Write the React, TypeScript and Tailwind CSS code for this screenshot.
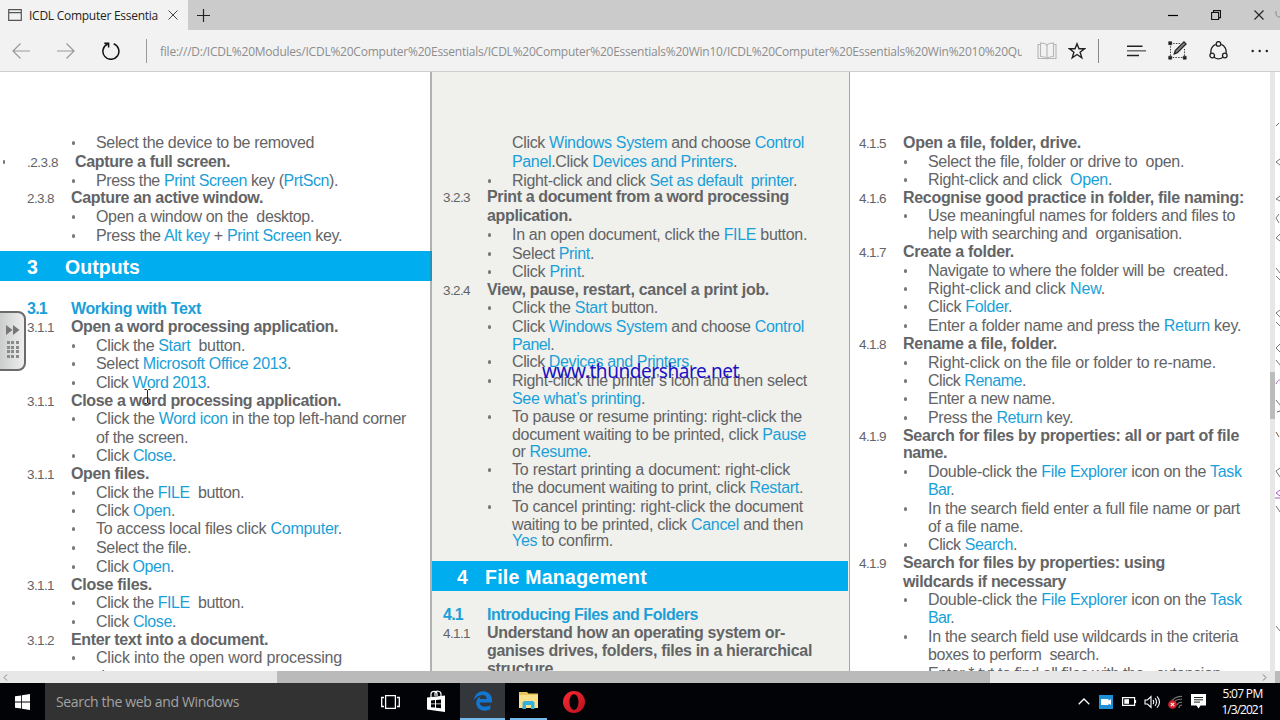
import clsx from "clsx"
import { FaEdgeLegacy } from "react-icons/fa6"

type Row = {
    y: number
    t: string
    w: number
    num?: string
    numW?: number
    kind?: 'head' | 'title' | 'band' | 'cont'
    indent?: number
    outer?: boolean
}

const SANS = '"Liberation Sans", Arial, sans-serif'
const UI = '"Open Sans", "Noto Sans", sans-serif'
const WIDE = '"Noto Sans", "DejaVu Sans", sans-serif'

const ctx = document.createElement('canvas').getContext('2d')!

// letter spacing that stretches a line to the wanted width
const spacing = (text: string, font: string, w: number) => {
    ctx.font = font
    return (w - ctx.measureText(text).width) / text.length
}

// parts between pipes are highlighted
function Fit({ text, w, size, weight = 400, family = SANS, className }: {
    text: string, w: number, size: number, weight?: number, family?: string, className?: string
}) {
    const plain = text.replaceAll('|', '')
    const letterSpacing = spacing(plain, `${weight} ${size}px ${family}`, w)
    return (
        <span className={clsx("whitespace-pre", className)} style={{ letterSpacing, fontSize: size, fontWeight: weight, fontFamily: family }}>
            {text.split('|').map((part, i) => i % 2 ? <span key={i} className="text-[#1a9fd8]">{part}</span> : part)}
        </span>
    )
}

const left: Row[] = [
    { y: 143, t: 'Select the device to be removed', w: 218 },
    { y: 162, t: 'Capture a full screen.', w: 155, num: '.2.3.8', numW: 31, kind: 'head', indent: 4, outer: true },
    { y: 181, t: 'Press the |Print Screen| key (|PrtScn|).', w: 242 },
    { y: 198, t: 'Capture an active window.', w: 192, num: '2.3.8', kind: 'head' },
    { y: 217, t: 'Open a window on the  desktop.', w: 218 },
    { y: 236, t: 'Press the |Alt key| + |Print Screen| key.', w: 247 },
    { y: 267, t: 'Outputs', w: 75, num: '3', numW: 10, kind: 'band' },
    { y: 309, t: 'Working with Text', w: 130, num: '3.1', numW: 20, kind: 'title' },
    { y: 327, t: 'Open a word processing application.', w: 267, num: '3.1.1', kind: 'head' },
    { y: 346, t: 'Click the |Start|  button.', w: 149 },
    { y: 364, t: 'Select |Microsoft Office 2013|.', w: 195 },
    { y: 383, t: 'Click |Word 2013|.', w: 114 },
    { y: 401, t: 'Close a word processing application.', w: 270, num: '3.1.1', kind: 'head' },
    { y: 419, t: 'Click the |Word icon| in the top left-hand corner', w: 310 },
    { y: 438, t: 'of the screen.', w: 92, kind: 'cont' },
    { y: 456, t: 'Click |Close|.', w: 80 },
    { y: 474, t: 'Open files.', w: 78, num: '3.1.1', kind: 'head' },
    { y: 493, t: 'Click the |FILE|  button.', w: 148 },
    { y: 511, t: 'Click |Open|.', w: 79 },
    { y: 529, t: 'To access local files click |Computer|.', w: 246 },
    { y: 548, t: 'Select the file.', w: 95 },
    { y: 567, t: 'Click |Open|.', w: 78 },
    { y: 585, t: 'Close files.', w: 81, num: '3.1.1', kind: 'head' },
    { y: 603, t: 'Click the |FILE|  button.', w: 148 },
    { y: 622, t: 'Click |Close|.', w: 80 },
    { y: 640, t: 'Enter text into a document.', w: 197, num: '3.1.2', kind: 'head' },
    { y: 658, t: 'Click into the open word processing', w: 246 },
    { y: 677, t: 'document.', w: 70, kind: 'cont' },
]

const middle: Row[] = [
    { y: 143, t: 'Click |Windows System| and choose |Control|', w: 292, kind: 'cont' },
    { y: 162, t: '|Panel|.Click |Devices and Printers|.', w: 225, kind: 'cont' },
    { y: 181, t: 'Right-click and click |Set as default  printer|.', w: 285 },
    { y: 197, t: 'Print a document from a word processing', w: 302, num: '3.2.3', kind: 'head' },
    { y: 216, t: 'application.', w: 85, kind: 'head' },
    { y: 235, t: 'In an open document, click the |FILE| button.', w: 295 },
    { y: 254, t: 'Select |Print|.', w: 82 },
    { y: 272, t: 'Click |Print|.', w: 73 },
    { y: 290, t: 'View, pause, restart, cancel a print job.', w: 282, num: '3.2.4', kind: 'head' },
    { y: 308, t: 'Click the |Start| button.', w: 146 },
    { y: 327, t: 'Click |Windows System| and choose |Control|', w: 292 },
    { y: 345, t: '|Panel|.', w: 42, kind: 'cont' },
    { y: 362, t: 'Click |Devices and Printers|.', w: 181 },
    { y: 381, t: 'Right-click the printer’s icon and then select', w: 295 },
    { y: 399, t: '|See what’s printing|.', w: 133, kind: 'cont' },
    { y: 417, t: 'To pause or resume printing: right-click the', w: 290 },
    { y: 435, t: 'document waiting to be printed, click |Pause|', w: 294, kind: 'cont' },
    { y: 452, t: 'or |Resume|.', w: 79, kind: 'cont' },
    { y: 470, t: 'To restart printing a document: right-click', w: 278 },
    { y: 488, t: 'the document waiting to print, click |Restart|.', w: 291, kind: 'cont' },
    { y: 507, t: 'To cancel printing: right-click the document', w: 291 },
    { y: 525, t: 'waiting to be printed, click |Cancel| and then', w: 291, kind: 'cont' },
    { y: 541, t: '|Yes| to confirm.', w: 101, kind: 'cont' },
    { y: 577, t: 'File Management', w: 162, num: '4', numW: 10, kind: 'band' },
    { y: 615, t: 'Introducing Files and Folders', w: 211, num: '4.1', numW: 20, kind: 'title' },
    { y: 633, t: 'Understand how an operating system or-', w: 298, num: '4.1.1', kind: 'head' },
    { y: 651, t: 'ganises drives, folders, files in a hierarchical', w: 325, kind: 'head' },
    { y: 669, t: 'structure.', w: 70, kind: 'head' },
]

const right: Row[] = [
    { y: 143, t: 'Open a file, folder, drive.', w: 178, num: '4.1.5', kind: 'head' },
    { y: 162, t: 'Select the file, folder or drive to  open.', w: 256 },
    { y: 180, t: 'Right-click and click  |Open|.', w: 184 },
    { y: 198, t: 'Recognise good practice in folder, file naming:', w: 341, num: '4.1.6', kind: 'head' },
    { y: 216, t: 'Use meaningful names for folders and files to', w: 307 },
    { y: 234, t: 'help with searching and  organisation.', w: 254, kind: 'cont' },
    { y: 252, t: 'Create a folder.', w: 111, num: '4.1.7', kind: 'head' },
    { y: 271, t: 'Navigate to where the folder will be  created.', w: 300 },
    { y: 289, t: 'Right-click and click |New|.', w: 177 },
    { y: 307, t: 'Click |Folder|.', w: 84 },
    { y: 326, t: 'Enter a folder name and press the |Return| key.', w: 313 },
    { y: 344, t: 'Rename a file, folder.', w: 154, num: '4.1.8', kind: 'head' },
    { y: 363, t: 'Right-click on the file or folder to re-name.', w: 288 },
    { y: 381, t: 'Click |Rename|.', w: 98 },
    { y: 399, t: 'Enter a new name.', w: 127 },
    { y: 418, t: 'Press the |Return| key.', w: 145 },
    { y: 436, t: 'Search for files by properties: all or part of file', w: 336, num: '4.1.9', kind: 'head' },
    { y: 453, t: 'name.', w: 44, kind: 'head' },
    { y: 472, t: 'Double-click the |File Explorer| icon on the |Task|', w: 314 },
    { y: 490, t: '|Bar|.', w: 26, kind: 'cont' },
    { y: 509, t: 'In the search field enter a full file name or part', w: 312 },
    { y: 527, t: 'of a file name.', w: 95, kind: 'cont' },
    { y: 545, t: 'Click |Search|.', w: 89 },
    { y: 563, t: 'Search for files by properties: using', w: 262, num: '4.1.9', kind: 'head' },
    { y: 582, t: 'wildcards if necessary', w: 163, kind: 'head' },
    { y: 600, t: 'Double-click the |File Explorer| icon on the |Task|', w: 314 },
    { y: 618, t: '|Bar|.', w: 26, kind: 'cont' },
    { y: 637, t: 'In the search field use wildcards in the criteria', w: 310 },
    { y: 655, t: 'boxes to perform  search.', w: 171, kind: 'cont' },
    { y: 674, t: 'Enter *.txt to find all files with the   extension', w: 293, kind: 'cont' },
]

// top of the page area in the window
const PAGE_TOP = 73

function Line({ row, height }: { row: Row, height: number }) {
    const bold = row.kind === 'head' || row.kind === 'title'
    return (
        <div className="flex shrink-0 leading-[18px]" style={{ height }}>
            <div className={clsx("relative -ml-px mr-px w-[43px] shrink-0", row.kind === 'title' && "text-[#1a9fd8]")}>
                {row.outer && <i className="absolute -left-[24px] top-2 h-[4px] w-[2px] rounded-full bg-[#77787a]" />}
                {row.num && (row.kind === 'title'
                    ? <Fit text={row.num} w={row.numW ?? 27} size={16} weight={700} />
                    : <Fit text={row.num} w={row.numW ?? 27} size={13.5} />)}
            </div>
            {!bold && (
                <div className="w-[25px] shrink-0">
                    {!row.kind && <i className="ml-px mt-[8px] block h-[4px] w-[2.500px] rounded-full bg-[#77787a]" />}
                </div>
            )}
            <div className={clsx(row.kind === 'title' && "text-[#1a9fd8]")} style={{ marginLeft: row.indent }}>
                <Fit text={row.t} w={row.w} size={16} weight={bold ? 700 : 400} />
            </div>
        </div>
    )
}

function Column({ rows, className, inset, bandClass }: { rows: Row[], className: string, inset: string, bandClass?: string }) {
    const half = (r: Row) => r.kind === 'band' ? 15 : 9
    const start = rows[0].y - 9 - PAGE_TOP
    return (
        <div className={clsx("flex h-full shrink-0 flex-col overflow-hidden", className)}>
            <div className="shrink-0" style={{ height: start }} />
            {rows.map((row, i) => {
                const next = rows[i + 1]
                const height = next ? (next.y - half(next)) - (row.y - half(row)) : 18
                if (row.kind === 'band') {
                    return (
                        <div key={i} className="shrink-0" style={{ height }}>
                            <div className={clsx("flex h-[30px] items-center bg-[#00adef] pt-[3px] leading-[27px] text-white", bandClass)}>
                                <div className="w-[38px] shrink-0">
                                    <Fit text={row.num!} w={row.numW!} size={19.5} weight={700} />
                                </div>
                                <Fit text={row.t} w={row.w} size={19.5} weight={700} />
                            </div>
                        </div>
                    )
                }
                return <div key={i} className={clsx("shrink-0", inset)}><Line row={row} height={height} /></div>
            })}
        </div>
    )
}

function TitleBar() {
    return (
        <div className="flex h-[30px] bg-[#cbcbcb]">
            <div className="flex w-[188px] items-center bg-[#f2f2f2] pl-2">
                <svg width="14" height="12" viewBox="0 0 14 12" fill="none" stroke="#555" strokeWidth="1.2"><path d="M.7.7h12.6v10.6H.7zM.7 3.6h12.6" /></svg>
                <div className="ml-[7px] w-[139px] leading-[30px] text-[#222]">
                    <Fit text="ICDL Computer Essentia" w={129} size={12} family={UI} />
                </div>
                <svg width="10" height="10" viewBox="0 0 10 10" stroke="#444" strokeWidth="1"><path d="M.5.5l9 9M9.500.5l-9 9" /></svg>
            </div>
            <svg className="ml-[9px] mt-[9px]" width="13" height="13" viewBox="0 0 13 13" stroke="#222" strokeWidth="1.2"><path d="M6.500 0v13M0 6.500h13" /></svg>
            <div className="ml-auto flex items-center">
                <svg className="mr-[33px]" width="10" height="10" viewBox="0 0 10 10" stroke="#000" strokeWidth="1.2"><path d="M0 5.500h10" /></svg>
                <svg className="mr-[33px]" width="10" height="10" viewBox="0 0 10 10" fill="none" stroke="#111" strokeWidth="1.1"><path d="M.6 2.500h7v7h-7zM2.500 2.500V.6h7v7H7.600" /></svg>
                <svg className="mr-[11px]" width="10" height="10" viewBox="0 0 10 10" stroke="#222" strokeWidth="1.1"><path d="M.5.5l9 9M9.500.5l-9 9" /></svg>
                <svg width="5" height="10" viewBox="0 0 5 10" fill="none" stroke="#8a8a8a"><path d="M1 1v3c0 2 2 3 4 3" /></svg>
            </div>
        </div>
    )
}

function AddressBar() {
    return (
        <div className="flex h-[42px] items-center border-b border-[#cfcfcf] bg-[#f2f2f2]">
            <svg className="ml-[12px]" width="18" height="16" viewBox="0 0 18 16" fill="none" stroke="#999" strokeWidth="1.2"><path d="M18 8H1M8.500.5L1 8l7.500 7.500" /></svg>
            <svg className="ml-[27px]" width="18" height="16" viewBox="0 0 18 16" fill="none" stroke="#999" strokeWidth="1.2"><path d="M0 8h17M9.500.5L17 8l-7.500 7.500" /></svg>
            <svg className="ml-[27px]" width="18" height="18" viewBox="0 0 18 18" fill="none" stroke="#111" strokeWidth="1.5"><path d="M11.700 1.800A8 8 0 1 1 5.600 2M2.300 1.200h4.300v4.300" /></svg>
            <div className="ml-[26px] h-6 w-px bg-[#999]" />
            <div className="ml-[13px] w-[862px] overflow-hidden leading-[24px] text-[#8d8d8d]">
                <Fit text="file:///D:/ICDL%20Modules/ICDL%20Computer%20Essentials/ICDL%20Computer%20Essentials%20Win10/ICDL%20Computer%20Essentials%20Win%2010%20Qu" w={864} size={12} family={UI} />
            </div>
            <svg className="ml-[15px]" width="20" height="18" viewBox="0 0 20 18" fill="none" stroke="#b5b5b5" strokeWidth="1.1"><path d="M10 3.500C9 1.500 6 1 3.500 1v13.500c3 0 5.500.5 6.500 2.300 1-1.800 3.500-2.300 6.500-2.300V1C14 1 11 1.500 10 3.500zM10 3.500v13M3.500 2.500H1v14h18v-14h-2.500" /></svg>
            <svg className="ml-[11px]" width="18" height="18" viewBox="0 0 18 18" fill="none" stroke="#222" strokeWidth="1.4"><path d="M9 1.800l2 5h5.500l-4.400 3.400 1.700 5.600L9 12.500l-4.800 3.300 1.700-5.600L1.500 6.800H7z" /></svg>
            <div className="ml-[12px] h-6 w-px bg-[#888]" />
            <svg className="ml-[28px]" width="19" height="12" viewBox="0 0 19 12" strokeWidth="1.4"><path d="M0 1.200h15.500M0 10.500h12" stroke="#222" /><path d="M0 5.800h19" stroke="#666" /></svg>
            <svg className="ml-[22px]" width="19" height="19" viewBox="0 0 19 19" fill="none">
                <path d="M2.500 2.500h10M2.500 2.500v14h14V8" stroke="#444" strokeDasharray="1.500 1.200" />
                <path d="M.7.7h3v3h-3zM.7 15.200h3v3h-3zM15.200 15.200h3v3h-3z" fill="#222" stroke="#222" strokeWidth=".6" />
                <path d="M6.300 12.800l1-3.300L16 .9l2 2-8.700 8.700z" stroke="#222" strokeWidth="1.300" fill="#888" />
            </svg>
            <svg className="ml-[22px]" width="19" height="19" viewBox="0 0 19 19" fill="none" stroke="#222" strokeWidth="1.300">
                <path d="M6.700 3.400A7.600 7.600 0 0 0 2 12M12.300 3.400A7.600 7.600 0 0 1 17 12M5 16.300a7.600 7.600 0 0 0 9 0" />
                <circle cx="9.500" cy="2.900" r="2.300" /><circle cx="3.200" cy="14.500" r="2.300" /><circle cx="15.800" cy="14.500" r="2.300" />
            </svg>
            <svg className="ml-[23px]" width="18" height="4" viewBox="0 0 18 4" fill="#222"><circle cx="1.700" cy="2" r="1.200" /><circle cx="8.700" cy="2" r="1.200" /><circle cx="15.800" cy="2" r="1.200" /></svg>
        </div>
    )
}

function SideTab() {
    return (
        <div className="absolute -left-1 top-[311px] flex h-[60px] w-[30px] flex-col items-center rounded-r-[8px] border-2 border-[#6b6b6b] bg-linear-to-r from-[#c9cacb] to-[#eeeeee] pl-[3px]">
            <svg className="mt-[12px]" width="14" height="10" viewBox="0 0 14 10" fill="#777"><path d="M0 0l6.500 5L0 10zM7 0l6.500 5L7 10z" /></svg>
            <div className="mt-[6px] grid grid-cols-3 gap-[1.500px]">
                {[...Array(12).keys()].map((i) => <i key={i} className="h-[3px] w-[3px] bg-[#8a8a8a]" />)}
            </div>
        </div>
    )
}

// edge of the page that lies behind the browser window
function Sliver() {
    return (
        <svg className="h-[599px] w-[5px] shrink-0 bg-white" viewBox="0 0 5 599" fill="none" stroke="#777" strokeWidth="1">
            <path d="M5 47l-3 3M5 50l-3 3" strokeOpacity="0" />
            <path d="M5 87l-4 3 4 3M5 162l-4 4 4 3M4 51l-3 3M5 124l-4 3 4 2M4 142l-3 4 3 5M1 196l4 5M1 204l4 4M5 238l-4 3 4 4M1 250l4 4M5 272l-4 4 4 4M1 288l4 5M1 328l4 5M5 396l-4 3 4 6M1 434l4 6M1 554l4 5" />
            <path d="M1 312c2-4 3-4 4-4M0 426h5M5 418l-4 3 4 3" stroke="#a85bc0" />
            <path d="M2 340l3-1M1 360l3 5" stroke="#7a5a3c" />
        </svg>
    )
}

function Taskbar() {
    return (
        <div className="flex h-[37px] items-center bg-[#020307] text-white">
            <svg className="ml-[15px]" width="15" height="16" viewBox="0 0 15 16" fill="#fff"><path d="M0 2.300l6.200-.9v6.200H0zM7 1.300L15 0v7.600H7zM0 8.400h6.200v6.200L0 13.700zM7 8.400h8V16l-8-1.200z" /></svg>
            <div className="ml-[15px] h-full w-[323px] bg-[#323232] pl-[11px] leading-[37px] text-[#a3a3a3]">
                <Fit text="Search the web and Windows" w={183} size={14} family={UI} />
            </div>
            <svg className="ml-[13px]" width="19" height="14" viewBox="0 0 19 14" fill="none" stroke="#fff" strokeWidth="1.300"><path d="M4.600.7h9.800v12.600H4.600zM3 2.500H.7v9H3M16 2.500h2.300v9H16" /></svg>
            <svg className="ml-[26px]" width="21" height="23" viewBox="0 0 21 23"><path d="M1 7.500L19 5.500V22L1 19.500z" fill="#fff" /><path d="M5 7V4c0-3.500 6-3.500 6 0v2M9 6V3c1-3 6-2 6 1v2" fill="none" stroke="#fff" strokeWidth="1.200" /><path d="M5 10.500l4-.4v3.300H5zM10 10l5-.5v3.900h-5zM5 14.300h4v3.300l-4-.4zM10 14.300h5v4l-5-.6z" fill="#020307" /></svg>
            <div className="ml-[13px] flex h-full w-[45px] items-center justify-center border-b-2 border-[#76b9ed] bg-[#33363a]">
                <FaEdgeLegacy className="text-[#1177d1]" size={20} />
            </div>
            <div className="ml-[5px] flex h-full w-[37px] items-center justify-center border-b-2 border-[#76b9ed]">
                <svg width="21" height="19" viewBox="0 0 21 19"><path d="M1 2V1h8l1.500 1.500H20V17H1z" fill="#e9c65a" /><path d="M1 4h19v13H1z" fill="#fbe08c" /><path d="M4.500 18v-6.500L6 10h9l1.500 1.500V18H13v-4H8v4z" fill="#35b2dc" /></svg>
            </div>
            <svg className="ml-[16px]" width="22" height="22" viewBox="0 0 22 22">
                <defs><linearGradient id="o" x1="0" y1="0" x2="1" y2="1"><stop offset="0" stopColor="#ff2b36" /><stop offset="1" stopColor="#b8101c" /></linearGradient></defs>
                <path fillRule="evenodd" fill="url(#o)" d="M11 0a11 11 0 1 0 0 22 11 11 0 0 0 0-22zM11 3.200c2.800 0 4.500 3.500 4.500 7.800s-1.700 7.800-4.500 7.800S6.500 15.300 6.500 11 8.200 3.200 11 3.200z" />
            </svg>
            <div className="ml-auto flex items-center">
                <svg width="12" height="7" viewBox="0 0 12 7" fill="none" stroke="#fff" strokeWidth="1.300"><path d="M.7 6.300L6 1l5.300 5.300" /></svg>
                <svg className="ml-[9px]" width="14" height="14" viewBox="0 0 14 14"><path d="M0 0h14v14H0z" fill="#1d8fd6" /><path d="M2 4h7.500v1.700L12 4v6L9.500 8.500V10H2z" fill="#fff" /></svg>
                <svg className="ml-[9px]" width="15" height="9" viewBox="0 0 15 9"><path d="M.6.6h12v7.800H.6zM13.500 3v3" fill="none" stroke="#fff" strokeWidth="1.200" /><path d="M2.300 2.200H7v4.600H2.300z" fill="#fff" /></svg>
                <svg className="ml-[7px]" width="17" height="14" viewBox="0 0 17 14" fill="none" stroke="#fff" strokeWidth="1.100"><path d="M1 5h2.500L7 1.500v11L3.500 9H1zM9 5c1 1 1 3 0 4M11 3.200c2 2 2 5.600 0 7.600M13 1.300c3.300 3.400 3.300 8 0 11.400" /></svg>
                <svg className="ml-[7px]" width="15" height="14" viewBox="0 0 15 14" fill="none"><path d="M3 8C4 4 9 1 14 1.500M6 8c1-2.500 4-4 8-3.700M9 10c1-2 3-3 5-2.700M11 13c0-2 1-3 3-3" stroke="#777" strokeWidth="1.200" /><circle cx="4.500" cy="9.500" r="4.300" fill="#d2232a" /><path d="M2.800 7.800l3.400 3.400M6.200 7.800l-3.400 3.400" stroke="#fff" strokeWidth="1.100" /></svg>
                <svg className="ml-[8px]" width="15" height="15" viewBox="0 0 15 15"><path d="M0 0h15v11.500H9.500L7.500 14.500 5.500 11.500H0z" fill="#fff" /><path d="M3 3.500h9M3 5.800h9M3 8.100h6" stroke="#222" /></svg>
                <div className="ml-[15px] mr-[16px] flex w-[43px] flex-col items-center leading-[16px]">
                    <Fit text="5:07 PM" w={40} size={12} family={UI} />
                    <Fit text="1/3/2021" w={42} size={12} family={UI} />
                </div>
            </div>
        </div>
    )
}

export default function App() {
    return (
        <div className="relative flex h-[720px] w-[1280px] flex-col overflow-hidden bg-white">
            <TitleBar />
            <AddressBar />
            <div className="flex h-[599px] shrink-0 overflow-hidden text-[#636466]">
                <Column rows={left} className="w-[430px]" inset="pl-[28px]" bandClass="pl-[27px]" />
                <div className="flex w-[2px] shrink-0 flex-col bg-[#b0b1b1]">
                    <div className="mt-[179px] h-[30px] bg-[#1d94bd]" />
                </div>
                <Column rows={middle} className="w-[416px] bg-[#f0f1ed]" inset="pl-[12px]" bandClass="pl-[25px] [&>div]:w-[28px]" />
                <div className="w-[2px] shrink-0 border-r border-[#a5a5a5] bg-[#f0f1ed]" />
                <Column rows={right} className="w-[420px]" inset="pl-[10px]" />
                <div className="flex w-[5px] shrink-0 flex-col bg-[#e7e7e7]">
                    <div className="mt-[300px] h-[47px] bg-[#bcbcbc]" />
                </div>
                <Sliver />
            </div>
            <div className="flex h-[12px] shrink-0 items-center bg-[#e7e7e7]">
                <svg className="ml-[3px]" width="5" height="7" viewBox="0 0 5 7" fill="none" stroke="#888"><path d="M4 .5l-3 3 3 3" /></svg>
                <div className="ml-[269px] h-full w-[713px] bg-[#bababa]" />
                <svg className="ml-auto mr-[8px]" width="5" height="7" viewBox="0 0 5 7" fill="none" stroke="#777"><path d="M1 .5l3 3-3 3" /></svg>
                <div className="h-full w-[5px] bg-[#bababa]" />
            </div>
            <Taskbar />
            <SideTab />
            <svg className="absolute left-[143px] top-[389px]" width="9" height="16" viewBox="0 0 9 16" fill="none" stroke="#222" strokeWidth="1"><path d="M1.500.5h2l1 1 1-1h2M4.500 1.500v12M1.500 14.500h2l1-1 1 1h2" /></svg>
            <div className="absolute left-[542px] top-[357px] leading-[28px] text-[#1a12c4]">
                <Fit text="www.thundershare.net" w={197} size={19} family={WIDE} />
            </div>
        </div>
    )
}
